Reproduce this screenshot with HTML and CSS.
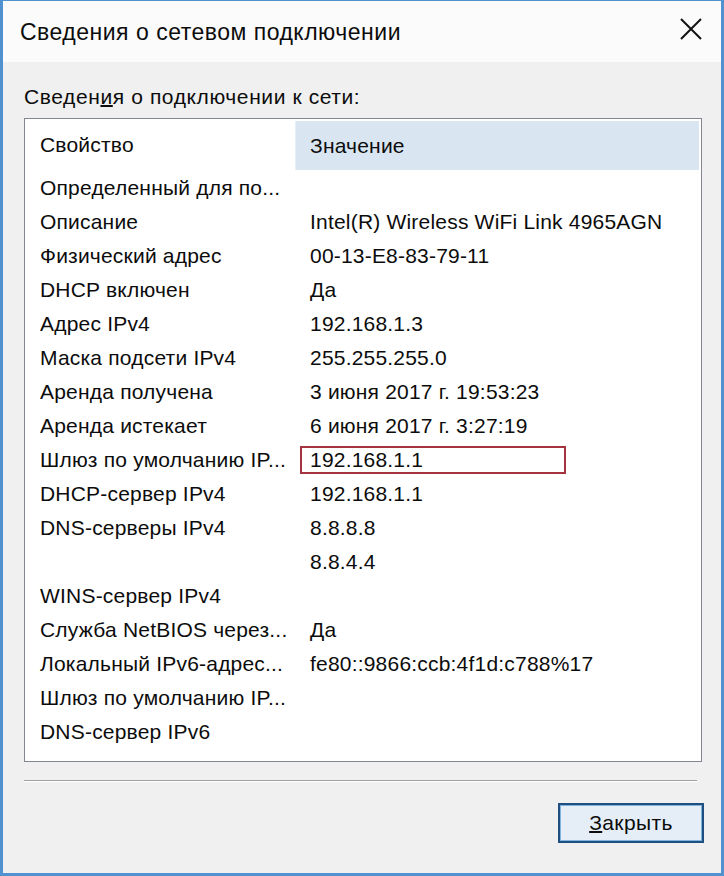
FILE: index.html
```html
<!DOCTYPE html>
<html lang="ru">
<head>
    <meta charset="UTF-8">
    <title>Сведения о сетевом подключении</title>
    <link rel="stylesheet" href="styles.css">
</head>
<body>
    <div class="window">
        <div class="titlebar">
            <span class="title">Сведения о сетевом подключении</span>
            <svg class="close" width="22" height="22" viewBox="0 0 22 22">
                <path d="M1 1 L21 21 M21 1 L1 21" stroke="#111" stroke-width="2" fill="none"/>
            </svg>
        </div>

        <div class="content">
            <div class="caption">Сведен<u>и</u>я о подключении к сети:</div>

            <div class="listbox">
                <div class="row head">
                    <div class="prop">Свойство</div>
                    <div class="val">Значение</div>
                </div>
                <div class="row"><div class="prop">Определенный для по...</div><div class="val"></div></div>
                <div class="row"><div class="prop">Описание</div><div class="val">Intel(R) Wireless WiFi Link 4965AGN</div></div>
                <div class="row"><div class="prop">Физический адрес</div><div class="val">00-13-E8-83-79-11</div></div>
                <div class="row"><div class="prop">DHCP включен</div><div class="val">Да</div></div>
                <div class="row"><div class="prop">Адрес IPv4</div><div class="val">192.168.1.3</div></div>
                <div class="row"><div class="prop">Маска подсети IPv4</div><div class="val">255.255.255.0</div></div>
                <div class="row"><div class="prop">Аренда получена</div><div class="val">3 июня 2017 г. 19:53:23</div></div>
                <div class="row"><div class="prop">Аренда истекает</div><div class="val">6 июня 2017 г. 3:27:19</div></div>
                <div class="row"><div class="prop">Шлюз по умолчанию IP...</div><div class="val"><span class="marked">192.168.1.1</span></div></div>
                <div class="row"><div class="prop">DHCP-сервер IPv4</div><div class="val">192.168.1.1</div></div>
                <div class="row"><div class="prop">DNS-серверы IPv4</div><div class="val">8.8.8.8</div></div>
                <div class="row"><div class="prop"></div><div class="val">8.8.4.4</div></div>
                <div class="row"><div class="prop">WINS-сервер IPv4</div><div class="val"></div></div>
                <div class="row"><div class="prop">Служба NetBIOS через...</div><div class="val">Да</div></div>
                <div class="row"><div class="prop">Локальный IPv6-адрес...</div><div class="val">fe80::9866:ccb:4f1d:c788%17</div></div>
                <div class="row"><div class="prop">Шлюз по умолчанию IP...</div><div class="val"></div></div>
                <div class="row"><div class="prop">DNS-сервер IPv6</div><div class="val"></div></div>
            </div>

            <div class="separator"></div>

            <div class="buttons">
                <button class="btn"><u>З</u>акрыть</button>
            </div>
        </div>
    </div>
</body>
</html>
```

FILE: styles.css
```css
html, body {
    margin: 0;
    padding: 0;
}
body {
    font-family: "Liberation Sans", Arial, sans-serif;
    font-size: 21px;
    letter-spacing: 0.2px;
    color: #0c0c0c;
    background: #f0f0f0;
}
.window {
    width: 724px;
    height: 876px;
    box-sizing: border-box;
    border: 3px solid #4f92cf;
    border-top-width: 1px;
    background: #f0f0f0;
}
.titlebar {
    height: 61px;
    background: #fbfbfb;
    display: flex;
    align-items: center;
    justify-content: space-between;
    padding: 0 19px 0 17px;
}
.title {
    font-size: 23px;
    letter-spacing: 0.5px;
    margin-top: 2px;
}
.close {
    margin-top: -5px;
}
.content {
    padding: 0 19px 0 21px;
}
.caption {
    height: 56px;
    line-height: 20px;
    padding-top: 25px;
    box-sizing: border-box;
    letter-spacing: 0.6px;
}
.caption u {
    text-decoration-thickness: 2px;
}
.listbox {
    height: 644px;
    box-sizing: border-box;
    border: 1px solid #828790;
    background: #fff;
    padding: 0 2px 0 0;
}
.row {
    display: flex;
    height: 34px;
    align-items: center;
}
.row.head {
    height: 52px;
    align-items: stretch;
}
.prop {
    width: 255px;
    padding-left: 15px;
    white-space: nowrap;
    flex-shrink: 0;
}
.val {
    flex: 1;
    padding-left: 15px;
    white-space: nowrap;
}
.head .prop,
.head .val {
    display: flex;
    align-items: center;
}
.head .val {
    margin-top: 2px;
    margin-bottom: 1px;
    background: #d9e6f1;
    border-left: 1px solid #e8f0f7;
    padding-left: 14px;
}
.marked {
    display: inline-block;
    width: 266px;
    height: 28px;
    line-height: 24px;
    box-sizing: border-box;
    border: 2px solid #a53440;
    margin-left: -10px;
    padding-left: 8px;
}
.separator {
    margin-top: 18px;
    width: 673px;
    border-top: 1px solid #a0a0a0;
    border-bottom: 1px solid #fff;
}
.buttons {
    display: flex;
    justify-content: flex-end;
    padding-top: 21px;
}
.btn {
    width: 146px;
    height: 40px;
    margin-right: -2px;
    font-family: inherit;
    font-size: 21px;
    letter-spacing: 0.4px;
    color: #0c0c0c;
    background: #e5eef6;
    border: 2px solid #1f4f80;
    box-shadow: inset 0 0 0 1px #7fb4dd;
    padding: 0;
}
.btn u {
    text-decoration-thickness: 2px;
}
```
